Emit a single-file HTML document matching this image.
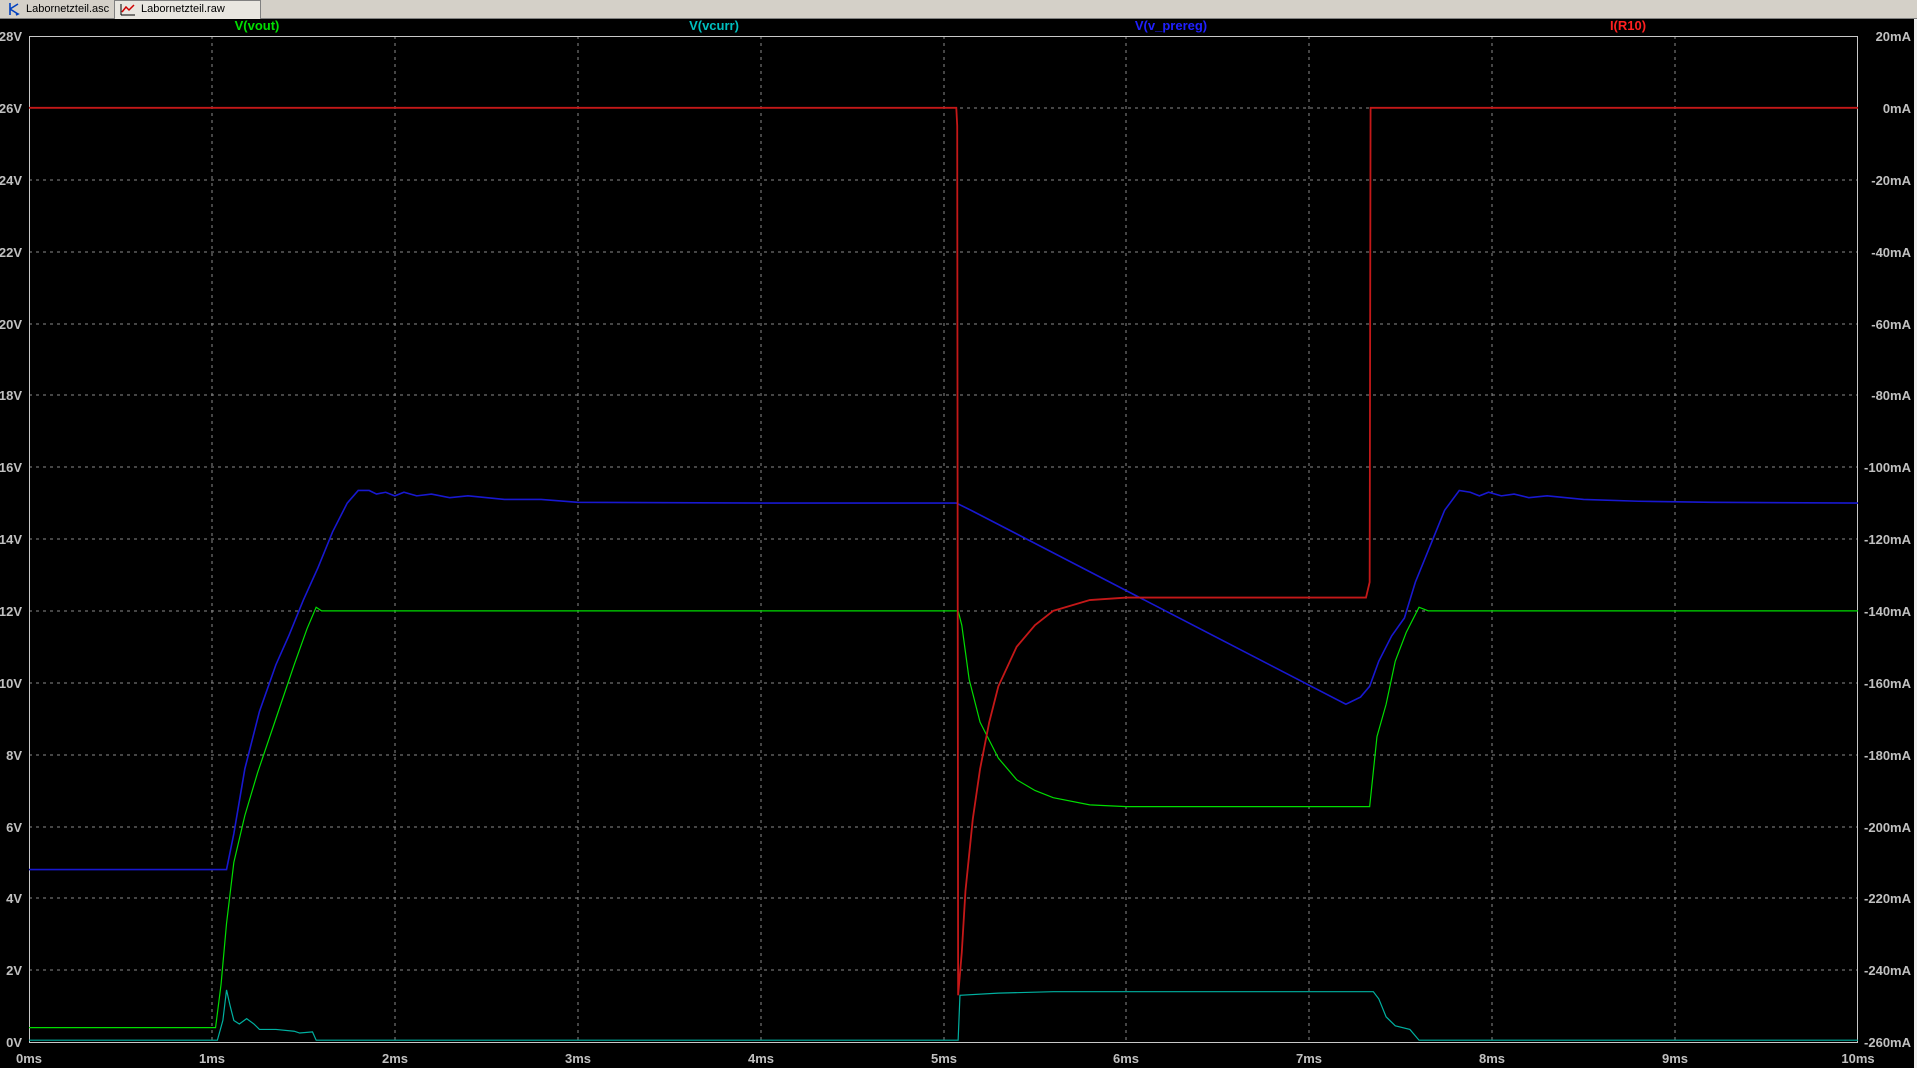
<!DOCTYPE html>
<html><head><meta charset="utf-8">
<style>
html,body{margin:0;padding:0;background:#000;width:1917px;height:1068px;overflow:hidden;font-family:"Liberation Sans",sans-serif}
.tabs{position:absolute;left:0;top:0;width:1917px;height:18px;background:#d4d0c8;border-bottom:1px solid #808080}
.tab{position:absolute;top:1px;height:16px;font-size:11px;line-height:16px;color:#000;padding-left:26px}
</style></head><body>
<div class="tabs">
<div class="tab" style="left:0;width:110px;background:#d4d0c8;">
<svg style="position:absolute;left:4px;top:1px" width="18" height="14"><path d="M6 1V13M6 7L14 2M6 7L14 12M12 11L14 12L12 13" stroke="#0040c0" stroke-width="1.6" fill="none"/></svg>Labornetzteil.asc</div>
<div class="tab" style="left:114px;width:119px;background:#e8e6e0;border:1px solid #808080;border-bottom:none;top:0;height:18px">
<svg style="position:absolute;left:4px;top:1px" width="18" height="15"><path d="M2 13H16M2 2V13" stroke="#000" stroke-width="1"/><path d="M3 10L7 5L10 8L15 3" stroke="#d00000" stroke-width="1.5" fill="none"/></svg>Labornetzteil.raw</div>
</div>
<svg width="1917" height="1068" style="position:absolute;left:0;top:0" font-family="Liberation Sans, sans-serif" font-size="13" font-weight="bold">
<rect x="1914" y="19" width="3" height="1049" fill="#f0f0f0"/>
<g stroke="#8a8a8a" stroke-width="1" stroke-dasharray="3,4">
<line x1="212" y1="36" x2="212" y2="1042"/><line x1="395" y1="36" x2="395" y2="1042"/><line x1="578" y1="36" x2="578" y2="1042"/><line x1="761" y1="36" x2="761" y2="1042"/><line x1="944" y1="36" x2="944" y2="1042"/><line x1="1126" y1="36" x2="1126" y2="1042"/><line x1="1309" y1="36" x2="1309" y2="1042"/><line x1="1492" y1="36" x2="1492" y2="1042"/><line x1="1675" y1="36" x2="1675" y2="1042"/>
<line x1="29" y1="108" x2="1858" y2="108"/><line x1="29" y1="180" x2="1858" y2="180"/><line x1="29" y1="252" x2="1858" y2="252"/><line x1="29" y1="324" x2="1858" y2="324"/><line x1="29" y1="395" x2="1858" y2="395"/><line x1="29" y1="467" x2="1858" y2="467"/><line x1="29" y1="539" x2="1858" y2="539"/><line x1="29" y1="611" x2="1858" y2="611"/><line x1="29" y1="683" x2="1858" y2="683"/><line x1="29" y1="755" x2="1858" y2="755"/><line x1="29" y1="827" x2="1858" y2="827"/><line x1="29" y1="898" x2="1858" y2="898"/><line x1="29" y1="970" x2="1858" y2="970"/>
</g>
<rect x="29.5" y="36.5" width="1828" height="1006" fill="none" stroke="#c8c8c8" stroke-width="1"/>
<g fill="#c0c0c0" text-anchor="end">
<text x="22" y="41">28V</text><text x="22" y="113">26V</text><text x="22" y="185">24V</text><text x="22" y="257">22V</text><text x="22" y="329">20V</text><text x="22" y="400">18V</text><text x="22" y="472">16V</text><text x="22" y="544">14V</text><text x="22" y="616">12V</text><text x="22" y="688">10V</text><text x="22" y="760">8V</text><text x="22" y="832">6V</text><text x="22" y="903">4V</text><text x="22" y="975">2V</text><text x="22" y="1047">0V</text>
</g>
<g fill="#c0c0c0" text-anchor="end">
<text x="1911" y="41">20mA</text><text x="1911" y="113">0mA</text><text x="1911" y="185">-20mA</text><text x="1911" y="257">-40mA</text><text x="1911" y="329">-60mA</text><text x="1911" y="400">-80mA</text><text x="1911" y="472">-100mA</text><text x="1911" y="544">-120mA</text><text x="1911" y="616">-140mA</text><text x="1911" y="688">-160mA</text><text x="1911" y="760">-180mA</text><text x="1911" y="832">-200mA</text><text x="1911" y="903">-220mA</text><text x="1911" y="975">-240mA</text><text x="1911" y="1047">-260mA</text>
</g>
<g fill="#c0c0c0" text-anchor="middle">
<text x="29" y="1063">0ms</text><text x="212" y="1063">1ms</text><text x="395" y="1063">2ms</text><text x="578" y="1063">3ms</text><text x="761" y="1063">4ms</text><text x="944" y="1063">5ms</text><text x="1126" y="1063">6ms</text><text x="1309" y="1063">7ms</text><text x="1492" y="1063">8ms</text><text x="1675" y="1063">9ms</text><text x="1858" y="1063">10ms</text>
</g>
<g text-anchor="middle">
<text x="257" y="30" fill="#00e000">V(vout)</text>
<text x="714" y="30" fill="#00c0c0">V(vcurr)</text>
<text x="1171" y="30" fill="#2020ff">V(v_prereg)</text>
<text x="1628" y="30" fill="#ff2020">I(R10)</text>
</g>
<g transform="translate(29,1042) scale(182.9,-35.93)" fill="none" stroke-width="1.2">
<polyline vector-effect="non-scaling-stroke" stroke="#00b0a0" points="0,0.05 1.03,0.05 1.06,0.6 1.08,1.45 1.1,1.0 1.12,0.6 1.15,0.5 1.19,0.65 1.23,0.5 1.26,0.35 1.35,0.35 1.45,0.3 1.48,0.25 1.55,0.28 1.57,0.05 5.08,0.05 5.09,1.3 5.3,1.36 5.6,1.4 7.35,1.4 7.38,1.2 7.42,0.7 7.47,0.45 7.55,0.35 7.6,0.05 10,0.05"/>
<polyline vector-effect="non-scaling-stroke" stroke="#00dd00" points="0,0.4 1.02,0.4 1.05,1.6 1.08,3.3 1.12,5 1.18,6.3 1.25,7.5 1.35,9 1.45,10.5 1.52,11.5 1.57,12.1 1.6,12 5.08,12 5.1,11.6 5.14,10.1 5.2,8.9 5.3,7.9 5.4,7.3 5.5,7.0 5.6,6.8 5.8,6.6 6,6.55 7.33,6.55 7.37,8.5 7.42,9.4 7.47,10.6 7.53,11.4 7.6,12.1 7.65,12 10,12"/>
<polyline vector-effect="non-scaling-stroke" stroke="#1818d0" stroke-width="1.6" points="0,4.8 1.08,4.8 1.12,5.8 1.18,7.6 1.26,9.2 1.35,10.5 1.42,11.3 1.5,12.3 1.58,13.2 1.66,14.2 1.74,15.0 1.8,15.35 1.86,15.35 1.9,15.25 1.95,15.3 2.0,15.2 2.05,15.3 2.12,15.2 2.2,15.25 2.3,15.15 2.4,15.2 2.6,15.1 2.8,15.1 3.0,15.02 4,15.0 5.07,15.0 5.15,14.8 7.2,9.4 7.28,9.6 7.33,9.9 7.38,10.6 7.45,11.3 7.52,11.8 7.58,12.8 7.66,13.8 7.74,14.8 7.82,15.35 7.88,15.3 7.93,15.2 7.98,15.3 8.05,15.2 8.12,15.25 8.2,15.15 8.3,15.2 8.5,15.1 8.8,15.05 9.2,15.02 10,15.0"/>
<polyline vector-effect="non-scaling-stroke" stroke="#c41818" stroke-width="1.8" points="0,26 5.07,26 5.075,25.5 5.08,1.3 5.1,2.5 5.12,4.2 5.16,6.2 5.2,7.6 5.25,8.9 5.3,9.9 5.4,11.0 5.5,11.6 5.6,12.0 5.8,12.3 6,12.37 7.31,12.37 7.33,12.8 7.335,26 10,26"/>
</g>
</svg>
</body></html>
